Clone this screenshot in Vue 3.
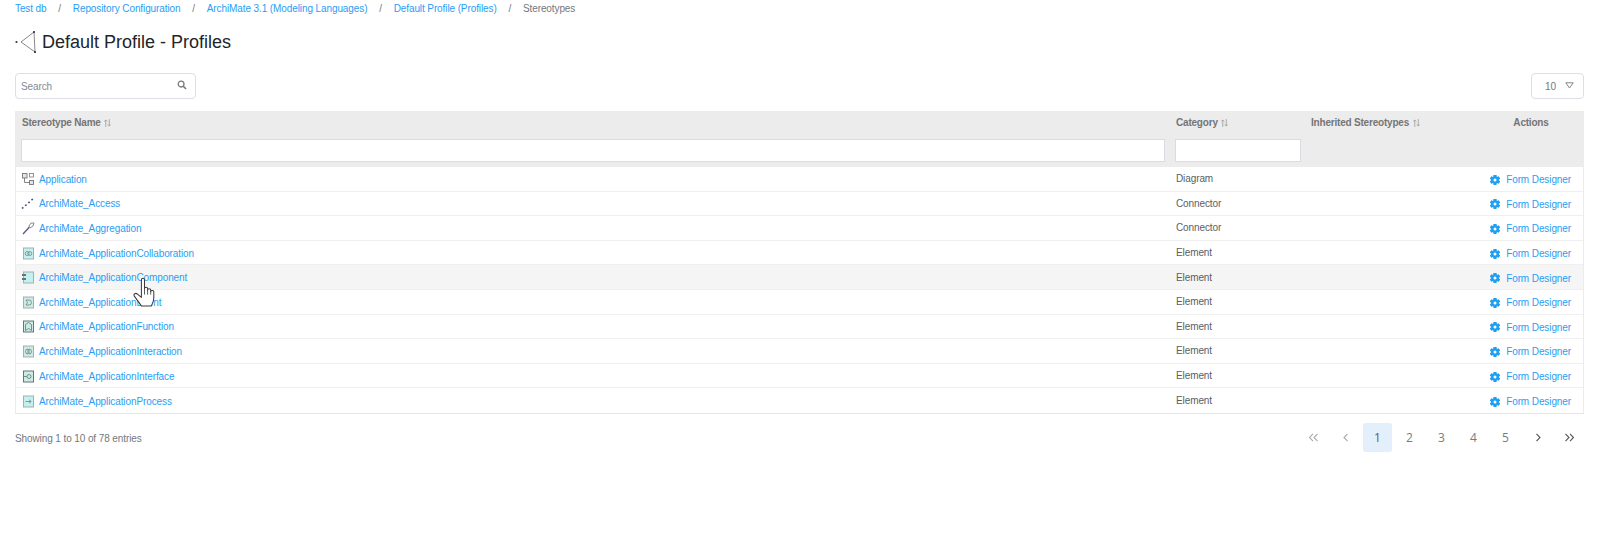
<script setup>
const crumbs = ['Test db', 'Repository Configuration', 'ArchiMate 3.1 (Modeling Languages)', 'Default Profile (Profiles)']
const rows = [
  { name: 'Application', cat: 'Diagram', icon: 'app' },
  { name: 'ArchiMate_Access', cat: 'Connector', icon: 'access' },
  { name: 'ArchiMate_Aggregation', cat: 'Connector', icon: 'aggr' },
  { name: 'ArchiMate_ApplicationCollaboration', cat: 'Element', icon: 'collab' },
  { name: 'ArchiMate_ApplicationComponent', cat: 'Element', icon: 'comp', hover: true },
  { name: 'ArchiMate_ApplicationEvent', cat: 'Element', icon: 'event' },
  { name: 'ArchiMate_ApplicationFunction', cat: 'Element', icon: 'func' },
  { name: 'ArchiMate_ApplicationInteraction', cat: 'Element', icon: 'inter' },
  { name: 'ArchiMate_ApplicationInterface', cat: 'Element', icon: 'iface' },
  { name: 'ArchiMate_ApplicationProcess', cat: 'Element', icon: 'proc' }
]
const pages = [1, 2, 3, 4, 5]
const teeth = [0, 60, 120, 180, 240, 300]
</script>

<template>
  <div class="page">
    <nav class="crumbs">
      <template v-for="c in crumbs" :key="c">
        <a class="link">{{ c }}</a><span class="sep">/</span>
      </template>
      <span class="current">Stereotypes</span>
    </nav>

    <div class="title">
      <svg class="title-icon" width="21" height="24" viewBox="0 0 21 24">
        <path d="M19 2 L6 12 L20 22 M19 2 L20 22" fill="none" stroke="#555" stroke-width="0.7" />
        <circle cx="1.5" cy="12" r="1.1" fill="#333" />
        <circle cx="19" cy="2" r="1.1" fill="#333" />
        <circle cx="20" cy="22" r="1.1" fill="#333" />
      </svg>
      <h1>Default Profile - Profiles</h1>
    </div>

    <div class="toolbar">
      <div class="search">
        <span>Search</span>
        <svg width="10" height="10" viewBox="0 0 11 11">
          <circle cx="4.5" cy="4.5" r="3.2" fill="none" stroke="#7a7a7a" stroke-width="1.4" />
          <path d="M7 7 L10 10" stroke="#7a7a7a" stroke-width="1.6" />
        </svg>
      </div>
      <div class="size">
        <span>10</span>
        <svg width="9" height="7" viewBox="0 0 9 7">
          <path d="M0.8 0.8 H8.2 L4.5 6 Z" fill="none" stroke="#777" stroke-width="0.9" />
        </svg>
      </div>
    </div>

    <div class="table">
      <div class="head">
        <div class="c1">
          <div class="th">Stereotype Name
            <svg class="sort" width="7" height="8" viewBox="0 0 8 9"><path d="M2 9 V1 M0.4 2.8 L2 1 L3.6 2.8 M6 0 V8 M4.4 6.2 L6 8 L7.6 6.2" fill="none" stroke="#999" stroke-width="0.9" /></svg>
          </div>
          <div class="filter"></div>
        </div>
        <div class="c2">
          <div class="th">Category
            <svg class="sort" width="7" height="8" viewBox="0 0 8 9"><path d="M2 9 V1 M0.4 2.8 L2 1 L3.6 2.8 M6 0 V8 M4.4 6.2 L6 8 L7.6 6.2" fill="none" stroke="#999" stroke-width="0.9" /></svg>
          </div>
          <div class="filter"></div>
        </div>
        <div class="c3">
          <div class="th">Inherited Stereotypes
            <svg class="sort" width="7" height="8" viewBox="0 0 8 9"><path d="M2 9 V1 M0.4 2.8 L2 1 L3.6 2.8 M6 0 V8 M4.4 6.2 L6 8 L7.6 6.2" fill="none" stroke="#999" stroke-width="0.9" /></svg>
          </div>
        </div>
        <div class="c4">
          <div class="th center">Actions</div>
        </div>
      </div>

      <div v-for="r in rows" :key="r.name" class="row" :class="{ hover: r.hover }">
        <div class="c1 name">
          <svg class="icon" width="14" height="14" viewBox="0 0 14 14">
            <template v-if="r.icon === 'app'">
              <rect x="1.5" y="1.5" width="4.5" height="4.5" fill="#dfe6ea" stroke="#777" stroke-width="0.9" />
              <rect x="8.5" y="1.5" width="4" height="3.5" fill="#fff" stroke="#888" stroke-width="0.9" />
              <rect x="8.5" y="8.5" width="4" height="4" fill="#dfe6ea" stroke="#777" stroke-width="0.9" />
              <path d="M3.5 6 V10.5 H8.5" fill="none" stroke="#777" stroke-width="0.9" />
            </template>
            <template v-else-if="r.icon === 'access'">
              <path d="M1 12.5 L13 2" fill="none" stroke="#4a4a78" stroke-width="1.6" stroke-dasharray="1.8 2.4" />
            </template>
            <template v-else-if="r.icon === 'aggr'">
              <path d="M2 13 L8.5 6" fill="none" stroke="#5a5a8c" stroke-width="1.4" />
              <path d="M8 5 L10 2 L13 2 L12 5 L9 7 Z" fill="#fff" stroke="#888" stroke-width="1" />
            </template>
            <template v-else>
              <rect x="2.5" y="2" width="10" height="11" :fill="r.icon === 'collab' || r.icon === 'comp' || r.icon === 'proc' ? '#c4f0ef' : '#cdeae5'" :stroke="r.icon === 'func' || r.icon === 'iface' ? '#5f7a76' : '#a3b0ae'" stroke-width="1" />
              <g v-if="r.icon === 'collab'" fill="none" stroke="#5f7a76" stroke-width="0.7">
                <circle cx="6.2" cy="7.5" r="2" /><circle cx="8.8" cy="7.5" r="2" />
              </g>
              <g v-else-if="r.icon === 'comp'">
                <rect x="1" y="4" width="4" height="2" fill="#5f7a76" />
                <rect x="1" y="8" width="4" height="2" fill="#5f7a76" />
              </g>
              <path v-else-if="r.icon === 'event'" d="M5 5 H8 A2.5 2.5 0 0 1 8 10 H5 L6.5 7.5 Z" fill="none" stroke="#5f7a76" stroke-width="0.7" />
              <path v-else-if="r.icon === 'func'" d="M4.5 11.5 V5.5 L7.5 3.5 L10.5 5.5 V11.5 L7.5 9.5 Z" fill="none" stroke="#5f7a76" stroke-width="0.8" />
              <g v-else-if="r.icon === 'inter'" fill="none" stroke="#5f7a76" stroke-width="0.7">
                <path d="M7 5 A2.5 2.5 0 0 0 7 10 Z" /><path d="M8 5 A2.5 2.5 0 0 1 8 10 Z" />
              </g>
              <g v-else-if="r.icon === 'iface'" fill="none" stroke="#5f7a76" stroke-width="0.8">
                <circle cx="8" cy="7.5" r="2" /><path d="M3 7.5 H6" />
              </g>
              <g v-else fill="none" stroke="#5f7a76" stroke-width="0.7">
                <path d="M4.5 7.5 H10 M8 5.8 L10.2 7.5 L8 9.2" />
              </g>
            </template>
          </svg>
          <a class="link">{{ r.name }}</a>
        </div>
        <div class="c2 cell">{{ r.cat }}</div>
        <div class="c3"></div>
        <div class="c4 action">
          <svg width="10" height="10" viewBox="0 0 10 10">
            <g fill="#1e9ff2">
              <rect v-for="t in teeth" :key="t" x="3.6" y="0" width="2.8" height="10" rx="0.4" :transform="`rotate(${t} 5 5)`" />
              <circle cx="5" cy="5" r="3.7" />
            </g>
            <circle cx="5" cy="5" r="1.5" fill="#fff" />
          </svg>
          <a class="link">Form Designer</a>
        </div>
        <svg v-if="r.hover" class="cursor" width="23" height="30" viewBox="0 0 22 29">
          <path d="M8 3 C8 0.6 11 0.6 11 3 V11 C11 9.6 14 9.6 14 11 V12.5 C14 11 17 11 17 12.8 V14 C17 12.6 20 12.8 20 14.5 V20 C20 24 18.5 26 17.5 28 H8 C6 25 3 21 1.2 18.5 C0 16.5 2.5 15 4.2 16.5 L8 19.8 Z" fill="#fff" stroke="#3a3a3a" stroke-width="1" stroke-linejoin="round" />
          <path d="M11 11 V17 M14 12.5 V17 M17 14 V17" fill="none" stroke="#3a3a3a" stroke-width="0.8" />
        </svg>
      </div>
    </div>

    <div class="foot">
      <span class="info">Showing 1 to 10 of 78 entries</span>
      <div class="pager">
        <span class="pg dim">
          <svg width="11" height="9" viewBox="0 0 11 9"><path d="M5 0.8 L1.5 4.5 L5 8.2 M9.5 0.8 L6 4.5 L9.5 8.2" fill="none" stroke="#aaa" stroke-width="1.1" /></svg>
        </span>
        <span class="pg dim">
          <svg width="6" height="9" viewBox="0 0 6 9"><path d="M4.5 0.8 L1 4.5 L4.5 8.2" fill="none" stroke="#aaa" stroke-width="1.1" /></svg>
        </span>
        <span v-for="p in pages" :key="p" class="pg" :class="{ on: p === 1 }">{{ p }}</span>
        <span class="pg">
          <svg width="6" height="9" viewBox="0 0 6 9"><path d="M1.5 0.8 L5 4.5 L1.5 8.2" fill="none" stroke="#555" stroke-width="1.1" /></svg>
        </span>
        <span class="pg">
          <svg width="11" height="9" viewBox="0 0 11 9"><path d="M1.5 0.8 L5 4.5 L1.5 8.2 M6 0.8 L9.5 4.5 L6 8.2" fill="none" stroke="#555" stroke-width="1.1" /></svg>
        </span>
      </div>
    </div>
  </div>
</template>

<style scoped>
.page {
  width: 1569px;
  margin-left: 15px;
  font-family: "Liberation Sans", Arial, sans-serif;
  font-size: 10px;
  letter-spacing: -0.1px;
  color: #495057;
}
.link { color: #2a9df4; }
.crumbs {
  display: flex;
  align-items: center;
  height: 16px;
}
.sep { margin: 0 11.8px; color: #74787e; }
.current { color: #74787e; }
.title {
  display: flex;
  align-items: center;
  height: 24px;
  margin-top: 14px;
}
.title-icon { margin-right: 6px; flex: none; }
h1 {
  margin: 0;
  font-size: 18px;
  font-weight: 400;
  letter-spacing: 0;
  color: #212529;
}
.toolbar {
  display: flex;
  justify-content: space-between;
  margin-top: 19px;
}
.search, .size {
  box-sizing: border-box;
  height: 26px;
  border: 1px solid #dcdfe3;
  border-radius: 4px;
  display: flex;
  align-items: center;
  justify-content: space-between;
}
.search { width: 181px; padding: 0 8px 0 5px; color: #858b91; }
.search svg { margin-top: -2px; }
.size { width: 53px; padding: 0 9px 0 13px; color: #74787e; }
.size svg { margin-top: -1px; }
.table {
  margin-top: 12px;
  border-left: 1px solid #ececec;
  border-right: 1px solid #ececec;
  border-bottom: 1px solid #e6e6e6;
}
.head {
  display: flex;
  height: 56px;
  background: #ececec;
  margin: 0 -1px;
  padding: 0 1px;
}
.c1 { width: 1154px; box-sizing: border-box; padding: 0 5px 0 5px; flex: none; }
.c2 { width: 135px; box-sizing: border-box; padding: 0 4px 0 6px; flex: none; }
.c3 { width: 170px; box-sizing: border-box; padding: 0 0 0 6px; flex: none; }
.c4 { width: 108px; box-sizing: border-box; flex: none; }
.th {
  height: 28px;
  padding-top: 1px;
  box-sizing: border-box;
  line-height: 22px;
  font-weight: 700;
  letter-spacing: -0.2px;
  color: #757575;
  white-space: nowrap;
}
.c1 .th { padding-left: 1px; }
.center { text-align: center; padding-left: 4px; }
.sort { margin-left: 1px; vertical-align: -1px; }
.filter {
  height: 23px;
  box-sizing: border-box;
  background: #fff;
  border: 1px solid #d9dce0;
}
.c2 .filter { margin-left: -1px; }
.row {
  position: relative;
  display: flex;
  align-items: center;
  height: 24.6px;
  box-sizing: border-box;
  border-bottom: 1px solid #efefef;
  background: #fff;
}
.row:last-child { border-bottom: 0; }
.hover { background: #f5f5f5; }
.name { display: flex; align-items: center; padding-left: 5px; padding-top: 1px; }
.icon { margin-right: 4px; flex: none; margin-top: -1px; }
.cell { color: #5a5e63; }
.action {
  display: flex;
  align-items: center;
  justify-content: flex-end;
  gap: 6px;
  padding-right: 12px;
  margin-top: 2px;
}
.cursor {
  position: absolute;
  left: 117px;
  top: 12px;
  z-index: 2;
}
.foot {
  display: flex;
  justify-content: space-between;
  align-items: center;
  margin-top: 9px;
}
.info { color: #74787e; padding-top: 3px; }
.pager { display: flex; gap: 3px; }
.pg {
  width: 29px;
  height: 29px;
  display: flex;
  align-items: center;
  justify-content: center;
  border-radius: 2px;
  font-family: "Open Sans", sans-serif;
  font-size: 12px;
  letter-spacing: 0;
  color: #777b80;
}
.on { background: #e3f0fb; color: #5a5e63; }
</style>

<style>
body { background: #fff; }
</style>
